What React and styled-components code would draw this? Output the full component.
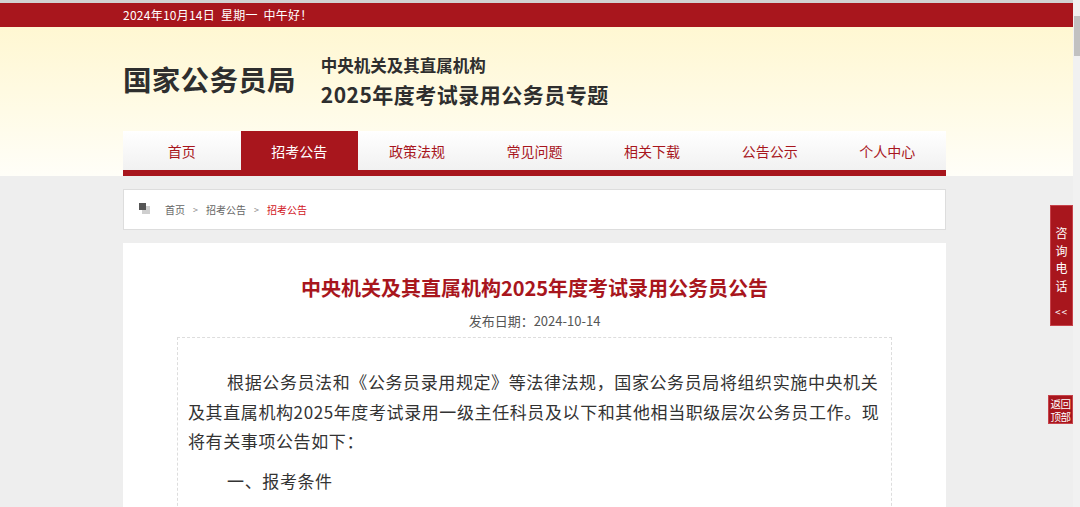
import styled, { createGlobalStyle } from 'styled-components';

const colors = {
  red: '#a8161d',
  redLight: '#c6424a',
  text: '#333333',
  gray: '#eeeeee',
  border: '#dddddd',
};

const GlobalStyle = createGlobalStyle`
  html, body {
    margin: 0;
    padding: 0;
    overflow: hidden;
    background: ${colors.gray};
    font-family: "Noto Sans CJK SC", "Noto Sans", "Liberation Sans", sans-serif;
    color: ${colors.text};
  }
`;

const Page = styled.div`
  width: 1073px;
  min-height: 507px;
  border-top: 3px solid #d2d2d2;
  box-sizing: border-box;
  background: ${colors.gray};
`;

const Wrap = styled.div`
  padding: 0 127px 0 123px;
`;

const TopBar = styled.div`
  height: 24px;
  background: ${colors.red};
  color: #fff;
  font-size: 12px;
  letter-spacing: 0.25px;
  line-height: 24px;
  white-space: pre;
`;

const Header = styled.header`
  background: linear-gradient(#fff7d2 0%, #fffbe6 55%, #fffef8 100%);
`;

const Brand = styled.div`
  height: 104px;
  display: flex;
  align-items: center;
  gap: 25px;
`;

const Logo = styled.h1`
  margin: 0 0 2px;
  font-size: 28.5px;
  font-weight: 700;
  letter-spacing: 0.3px;
  color: #2e2e2e;
`;

const Subtitle = styled.div`
  display: flex;
  flex-direction: column;
  gap: 6px;
  color: #2e2e2e;
  font-weight: 700;
  margin-top: 4px;
`;

const SubSmall = styled.div`
  font-size: 16.5px;
  line-height: 20px;
`;

const SubLarge = styled.div`
  font-size: 21px;
  line-height: 26px;
  letter-spacing: 0.5px;
`;

const Nav = styled.nav`
  display: flex;
  height: 39px;
  background: linear-gradient(#ffffff, #f1f1f1);
  border-bottom: 6px solid ${colors.red};
`;

const NavItem = styled.a`
  flex: 1;
  display: flex;
  align-items: center;
  justify-content: center;
  font-size: 14px;
  color: ${(p) => (p.$active ? '#fff' : colors.red)};
  background: ${(p) => (p.$active ? colors.red : 'transparent')};
  text-decoration: none;
  padding-top: 1px;
`;

const Crumbs = styled.div`
  margin-top: 13px;
  height: 39px;
  background: #fff;
  border: 1px solid ${colors.border};
  display: flex;
  align-items: center;
  padding-left: 15px;
  font-size: 10px;
  color: #666;
`;

const CrumbIcon = styled.svg`
  margin: 0 15px 2px 0;
`;

const Crumb = styled.span`
  color: ${(p) => (p.$current ? '#d1141c' : '#666')};
`;

const Sep = styled.span`
  margin: 0 8px;
  color: #888;
  font-size: 9px;
`;

const Article = styled.article`
  margin-top: 13px;
  background: #fff;
  padding: 30px 54px 40px;
  min-height: 300px;
`;

const Title = styled.h2`
  margin: 0;
  text-align: center;
  font-size: 20px;
  line-height: 30px;
  font-weight: 700;
  color: ${colors.red};
`;

const Meta = styled.div`
  margin-top: 8px;
  text-align: center;
  font-size: 13px;
  line-height: 20px;
  color: #555;
`;

const Body = styled.div`
  margin-top: 6px;
  border: 1px dashed ${colors.border};
  padding: 29px 10px 20px;
`;

const Para = styled.p`
  margin: 0 0 10px;
  font-size: 17px;
  letter-spacing: 0.6px;
  line-height: 29.5px;
  text-indent: 2.3em;
  color: #333;
  white-space: nowrap;
`;

const SideTab = styled.div`
  position: fixed;
  right: 7px;
  top: ${(p) => p.$top}px;
  width: 23px;
  background: ${colors.red};
  border: 1px solid ${colors.redLight};
  color: #fff;
  font-size: 12px;
  text-align: center;
  display: flex;
  flex-direction: column;
  align-items: center;
`;

const Consult = styled(SideTab)`
  height: 121px;
  padding-top: 18px;
  box-sizing: border-box;
  line-height: 17.5px;
`;

const Arrows = styled.span`
  margin-top: 9px;
  font-size: 10px;
  letter-spacing: 1px;
`;

const BackTop = styled(SideTab)`
  height: 27px;
  justify-content: center;
  line-height: 13px;
  font-size: 10.5px;
  letter-spacing: -0.5px;
  white-space: nowrap;
`;

const Scrollbar = styled.div`
  position: fixed;
  top: 0;
  right: 0;
  bottom: 0;
  width: 7px;
  background: #f1f1f1;
`;

const Thumb = styled.div`
  margin: 16px 0 0 1px;
  width: 6px;
  height: 40px;
  background: #c1c1c1;
`;

const navItems = ['首页', '招考公告', '政策法规', '常见问题', '相关下载', '公告公示', '个人中心'];

export default function App() {
  return (
    <>
      <GlobalStyle />
      <Page>
        <TopBar>
          <Wrap>2024年10月14日  星期一  中午好！</Wrap>
        </TopBar>
        <Header>
          <Wrap>
            <Brand>
              <Logo>国家公务员局</Logo>
              <Subtitle>
                <SubSmall>中央机关及其直属机构</SubSmall>
                <SubLarge>2025年度考试录用公务员专题</SubLarge>
              </Subtitle>
            </Brand>
            <Nav>
              {navItems.map((item) => (
                <NavItem key={item} $active={item === '招考公告'}>
                  {item}
                </NavItem>
              ))}
            </Nav>
          </Wrap>
        </Header>
        <Wrap>
          <Crumbs>
            <CrumbIcon width="11" height="11" viewBox="0 0 11 11">
              <rect x="3" y="3" width="8" height="8" fill="#cfcfcf" />
              <rect x="0" y="0" width="7" height="7" fill="#555" />
            </CrumbIcon>
            <Crumb>首页</Crumb>
            <Sep>&gt;</Sep>
            <Crumb>招考公告</Crumb>
            <Sep>&gt;</Sep>
            <Crumb $current>招考公告</Crumb>
          </Crumbs>
          <Article>
            <Title>中央机关及其直属机构2025年度考试录用公务员公告</Title>
            <Meta>发布日期：2024-10-14</Meta>
            <Body>
              <Para>
                根据公务员法和《公务员录用规定》等法律法规，国家公务员局将组织实施中央机关
                <br />
                及其直属机构2025年度考试录用一级主任科员及以下和其他相当职级层次公务员工作。现
                <br />
                将有关事项公告如下：
              </Para>
              <Para>一、报考条件</Para>
            </Body>
          </Article>
        </Wrap>
      </Page>
      <Consult $top={205}>
        <span>咨</span>
        <span>询</span>
        <span>电</span>
        <span>话</span>
        <Arrows>&lt;&lt;</Arrows>
      </Consult>
      <BackTop $top={395}>
        <span>返回</span>
        <span>顶部</span>
      </BackTop>
      <Scrollbar>
        <Thumb />
      </Scrollbar>
    </>
  );
}
